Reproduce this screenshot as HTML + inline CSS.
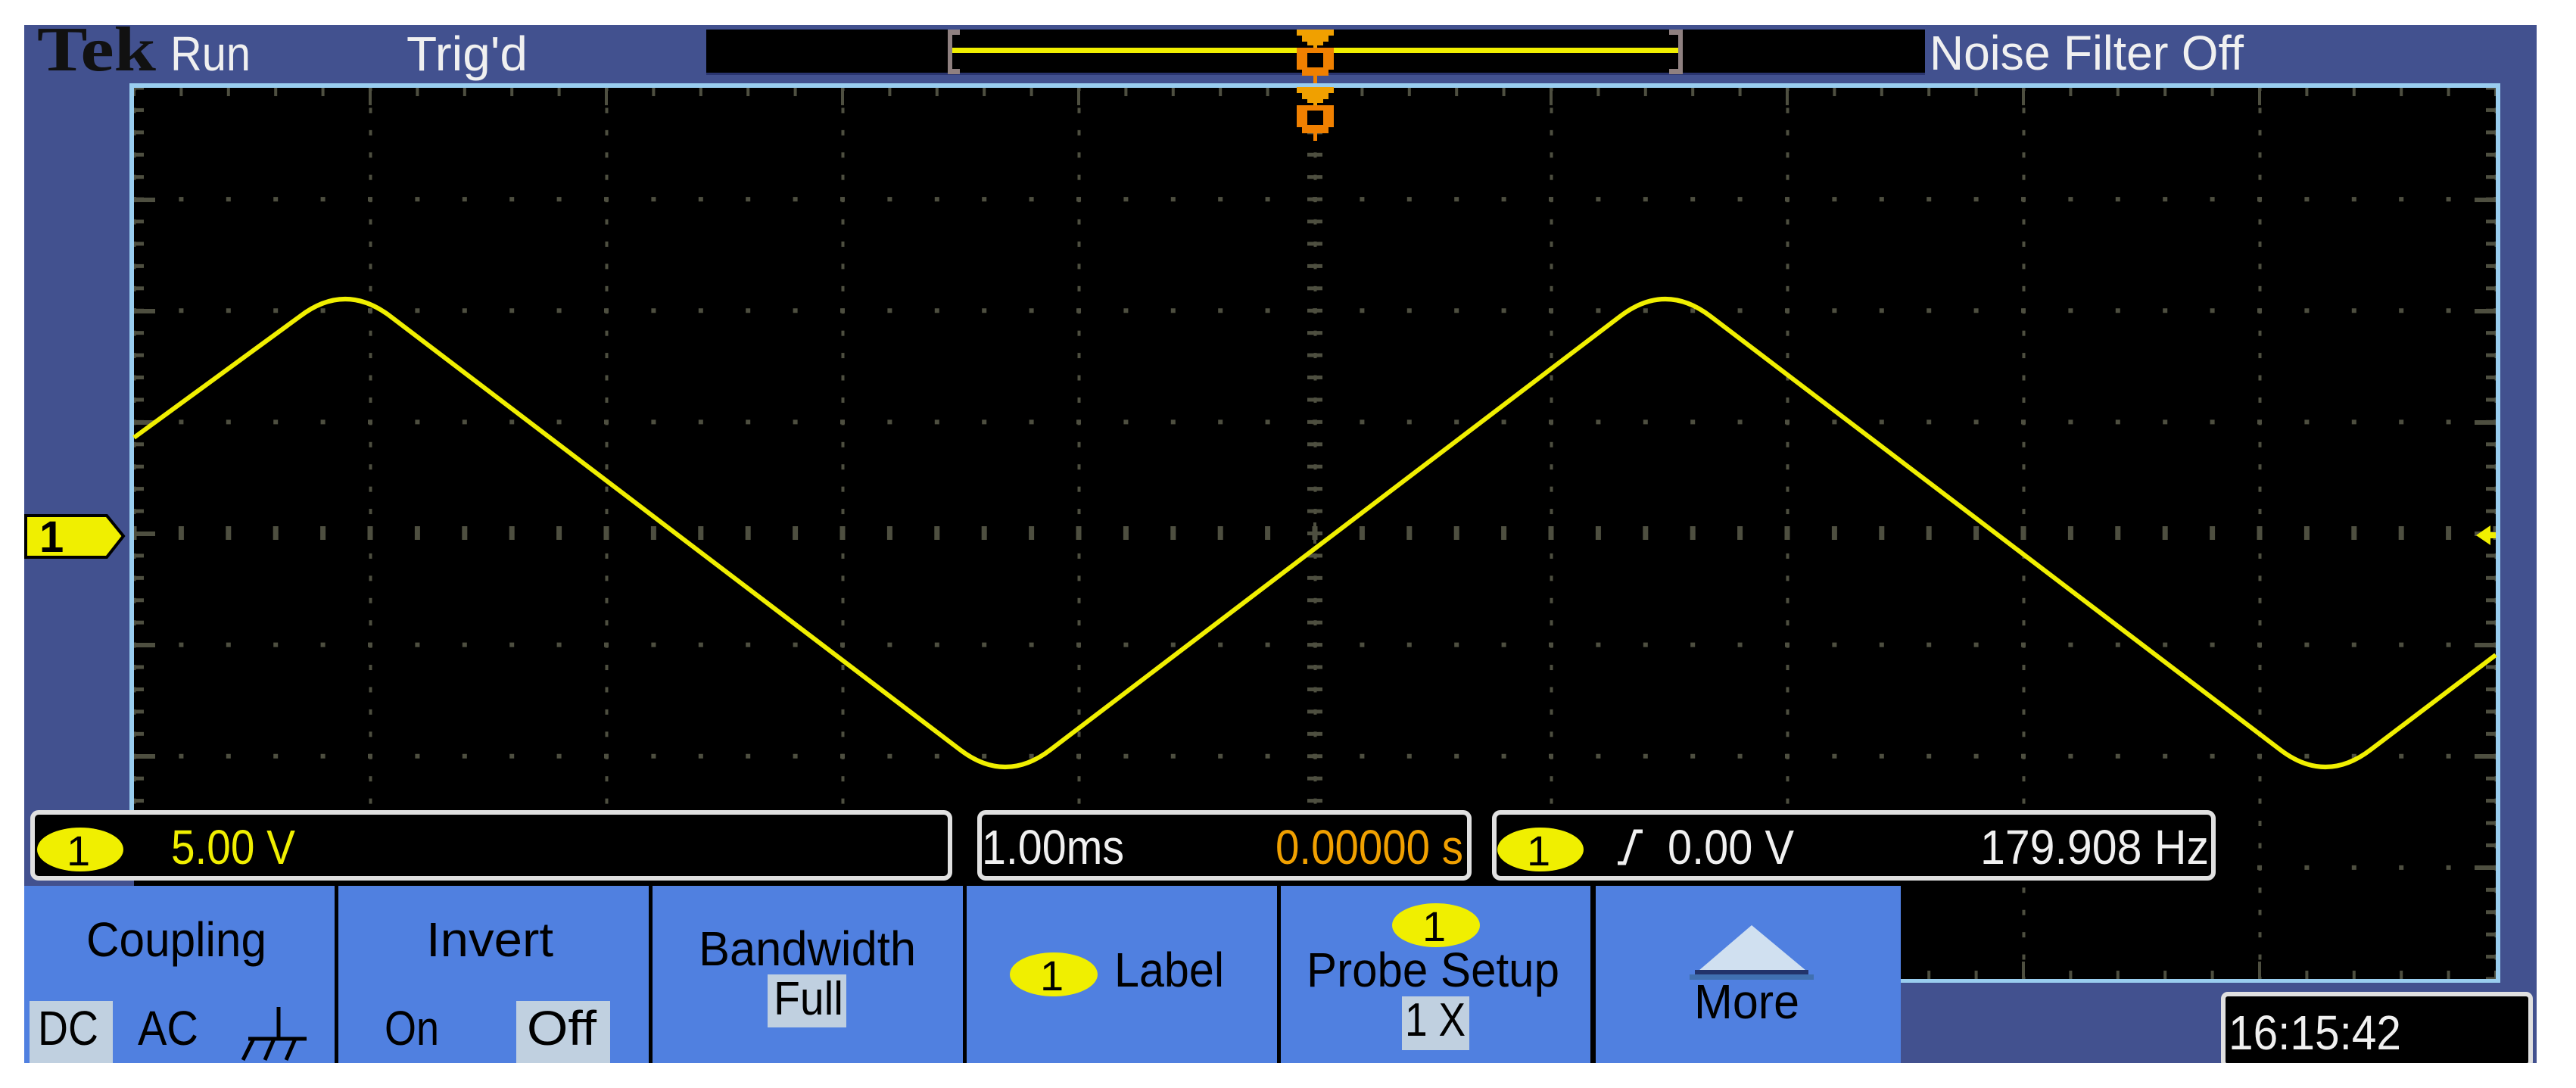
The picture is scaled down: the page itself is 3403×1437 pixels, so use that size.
<!DOCTYPE html>
<html><head><meta charset="utf-8"><style>
html,body{margin:0;padding:0;background:#fff;}
svg{display:block;}
text{font-family:"Liberation Sans",sans-serif;}
</style></head><body>
<svg width="3403" height="1437" viewBox="0 0 3403 1437" xmlns="http://www.w3.org/2000/svg">
<defs>
<pattern id="dH" patternUnits="userSpaceOnUse" x="174" y="113" width="62.4" height="147.125"><rect x="0" y="0" width="6" height="6" fill="#4e4f40"/></pattern>
<pattern id="dV" patternUnits="userSpaceOnUse" x="487.5" y="113" width="312" height="29.425"><rect x="0" y="0" width="4" height="7" fill="#4e4f40"/></pattern>
<pattern id="tTop" patternUnits="userSpaceOnUse" x="175" y="0" width="62.4" height="1437"><rect x="0" y="0" width="4" height="1437" fill="#4e4f40"/></pattern>
<pattern id="tSide" patternUnits="userSpaceOnUse" x="0" y="113.5" width="3403" height="29.425"><rect x="0" y="0" width="3403" height="5" fill="#4e4f40"/></pattern>
<pattern id="cH" patternUnits="userSpaceOnUse" x="173.5" y="0" width="62.4" height="1437"><rect x="0" y="0" width="7" height="1437" fill="#4e4f40"/></pattern>
</defs>

<rect x="32" y="33" width="3319" height="1371" fill="#42518f"/>
<rect x="171" y="110" width="3132" height="1188" fill="#99cdef"/>
<rect x="177" y="116" width="3120" height="1177" fill="#000"/>
<rect x="177" y="116" width="3120" height="1177" fill="url(#dV)"/>
<rect x="177" y="250" width="3120" height="1000" fill="url(#dH)"/>
<rect x="177" y="116" width="3120" height="11" fill="url(#tTop)"/>
<rect x="177" y="1282" width="3120" height="11" fill="url(#tTop)"/>
<rect x="177" y="116" width="13" height="1177" fill="url(#tSide)"/>
<rect x="3284" y="116" width="13" height="1177" fill="url(#tSide)"/>
<rect x="177" y="695" width="3120" height="18" fill="url(#cH)"/>
<rect x="1727" y="116" width="20" height="1177" fill="url(#tSide)"/>
<g fill="#4e4f40">
<rect x="487" y="116" width="4" height="23"/><rect x="799" y="116" width="4" height="23"/><rect x="1111" y="116" width="4" height="23"/><rect x="1423" y="116" width="4" height="23"/><rect x="1735" y="116" width="4" height="23"/><rect x="2047" y="116" width="4" height="23"/><rect x="2359" y="116" width="4" height="23"/><rect x="2671" y="116" width="4" height="23"/><rect x="2983" y="116" width="4" height="23"/>
<rect x="2671" y="1270" width="4" height="23"/><rect x="2983" y="1270" width="4" height="23"/>
<rect x="177" y="261" width="28" height="6"/><rect x="177" y="408" width="28" height="6"/><rect x="177" y="555" width="28" height="6"/><rect x="177" y="702" width="28" height="6"/><rect x="177" y="849" width="28" height="6"/><rect x="177" y="996" width="28" height="6"/><rect x="177" y="1143" width="28" height="6"/>
<rect x="3269" y="261" width="28" height="6"/><rect x="3269" y="408" width="28" height="6"/><rect x="3269" y="555" width="28" height="6"/><rect x="3269" y="702" width="28" height="6"/><rect x="3269" y="849" width="28" height="6"/><rect x="3269" y="996" width="28" height="6"/><rect x="3269" y="1143" width="28" height="6"/>
<rect x="1735" y="690" width="4" height="28"/>
</g>

<path d="M177,578 L396,418 Q456,372 516,418 L1268,990 Q1328,1036 1388,990 L2140,418 Q2200,372 2260,418 L3012,990 Q3072,1036 3132,990 L3297,865" fill="none" stroke="#f0ef00" stroke-width="6" stroke-linejoin="round"/>

<text x="49" y="93" font-weight="bold" font-size="84" fill="#111" style="font-family:'Liberation Serif',serif" textLength="157" lengthAdjust="spacingAndGlyphs">Tek</text>
<text x="225" y="93" font-size="64" fill="#f0f0f0" textLength="106" lengthAdjust="spacingAndGlyphs">Run</text>
<text x="537" y="93" font-size="64" fill="#f0f0f0" textLength="160" lengthAdjust="spacingAndGlyphs">Trig'd</text>
<rect x="933" y="39" width="1610" height="59" fill="#000"/>
<rect x="933" y="96" width="1610" height="3" fill="#2a3570"/>
<g fill="#8f8080">
<rect x="1252" y="39" width="6" height="59"/><rect x="1252" y="39" width="16" height="7"/><rect x="1252" y="91" width="16" height="7"/>
<rect x="2217" y="39" width="6" height="59"/><rect x="2205" y="39" width="18" height="7"/><rect x="2205" y="91" width="18" height="7"/>
</g>
<rect x="1258" y="63" width="959" height="7" fill="#f0ef00"/>
<g>
<path d="M1713,39 H1762 V47 H1755 V55 H1748 V60 H1727 V55 H1720 V47 H1713 Z" fill="#f0a000"/>
<rect x="1735" y="56" width="5" height="10" fill="#f0a000"/>
<path d="M1713,63 H1762 V92 H1755 V100 H1720 V92 H1713 Z" fill="#f08000"/>
<rect x="1727" y="70" width="21" height="19" fill="#000"/>
<rect x="1735" y="100" width="5" height="10" fill="#f08000"/>
<path d="M1713,115 H1762 V123 H1755 V131 H1748 V136 H1727 V131 H1720 V123 H1713 Z" fill="#f0a000"/>
<rect x="1735" y="132" width="5" height="10" fill="#f0a000"/>
<path d="M1713,139 H1762 V168 H1755 V176 H1720 V168 H1713 Z" fill="#f08000"/>
<rect x="1727" y="146" width="21" height="19" fill="#000"/>
<rect x="1735" y="176" width="5" height="10" fill="#f08000"/>
</g>
<text x="2549" y="92" font-size="64" fill="#f0f0f0" textLength="415" lengthAdjust="spacingAndGlyphs">Noise Filter Off</text>

<path d="M34,681 H141 L163,708 L141,736 H34 Z" fill="#f0ef00" stroke="#000" stroke-width="4"/>
<text x="52" y="729" font-size="58" fill="#000" font-weight="bold">1</text>
<path d="M3271,707 L3290,694 V703 H3297 V711 H3290 V720 Z" fill="#f0ef00"/>

<rect x="32" y="1163" width="145" height="7" fill="#42518f"/>
<g fill="#000" stroke="#e0e0e0" stroke-width="6">
<rect x="43" y="1073" width="1212" height="87" rx="8"/>
<rect x="1294" y="1073" width="647" height="87" rx="8"/>
<rect x="1974" y="1073" width="950" height="87" rx="8"/>
</g>
<ellipse cx="106" cy="1122" rx="57" ry="29" fill="#f0ef00"/>
<text x="88" y="1143" font-size="56" fill="#000">1</text>
<text x="226" y="1141" font-size="64" fill="#f0ef00" textLength="164" lengthAdjust="spacingAndGlyphs">5.00 V</text>
<text x="1297" y="1141" font-size="64" fill="#f0f0f0" textLength="188" lengthAdjust="spacingAndGlyphs">1.00ms</text>
<text x="1685" y="1141" font-size="64" fill="#f0a000" textLength="248" lengthAdjust="spacingAndGlyphs">0.00000 s</text>
<ellipse cx="2035" cy="1122" rx="57" ry="29" fill="#f0ef00"/>
<text x="2017" y="1143" font-size="56" fill="#000">1</text>
<path d="M2137,1140 H2146 L2160,1098 H2170" fill="none" stroke="#f0f0f0" stroke-width="5"/>
<text x="2203" y="1141" font-size="64" fill="#f0f0f0" textLength="167" lengthAdjust="spacingAndGlyphs">0.00 V</text>
<text x="2616" y="1141" font-size="64" fill="#f0f0f0" textLength="302" lengthAdjust="spacingAndGlyphs">179.908 Hz</text>

<rect x="32" y="1170" width="2479" height="234" fill="#000"/>
<g fill="#5080e0">
<rect x="32" y="1170" width="410" height="234"/>
<rect x="447" y="1170" width="410" height="234"/>
<rect x="862" y="1170" width="410" height="234"/>
<rect x="1277" y="1170" width="410" height="234"/>
<rect x="1692" y="1170" width="409" height="234"/>
<rect x="2108" y="1170" width="403" height="234"/>
</g>
<rect x="2511" y="1298" width="840" height="106" fill="#42518f"/>

<text x="114" y="1263" font-size="64" fill="#000" textLength="238" lengthAdjust="spacingAndGlyphs">Coupling</text>
<rect x="39" y="1322" width="110" height="82" fill="#c0d0e0"/>
<text x="50" y="1380" font-size="64" fill="#000" textLength="80" lengthAdjust="spacingAndGlyphs">DC</text>
<text x="182" y="1380" font-size="64" fill="#000" textLength="80" lengthAdjust="spacingAndGlyphs">AC</text>
<path d="M368,1330 V1372 M328,1372 H405 M335,1372 L321,1400 M362,1372 L350,1400 M390,1372 L378,1400" fill="none" stroke="#000" stroke-width="5"/>
<text x="563" y="1263" font-size="64" fill="#000" textLength="168" lengthAdjust="spacingAndGlyphs">Invert</text>
<text x="508" y="1380" font-size="64" fill="#000" textLength="72" lengthAdjust="spacingAndGlyphs">On</text>
<rect x="682" y="1322" width="124" height="82" fill="#c0d0e0"/>
<text x="696" y="1380" font-size="64" fill="#000" textLength="92" lengthAdjust="spacingAndGlyphs">Off</text>
<text x="923" y="1275" font-size="64" fill="#000" textLength="287" lengthAdjust="spacingAndGlyphs">Bandwidth</text>
<rect x="1014" y="1287" width="104" height="70" fill="#c0d0e0"/>
<text x="1022" y="1340" font-size="62" fill="#000" textLength="92" lengthAdjust="spacingAndGlyphs">Full</text>
<ellipse cx="1392" cy="1287" rx="58" ry="29" fill="#f0ef00"/>
<text x="1374" y="1308" font-size="56" fill="#000">1</text>
<text x="1472" y="1303" font-size="64" fill="#000" textLength="145" lengthAdjust="spacingAndGlyphs">Label</text>
<ellipse cx="1897" cy="1222" rx="58" ry="29" fill="#f0ef00"/>
<text x="1879" y="1243" font-size="56" fill="#000">1</text>
<text x="1726" y="1303" font-size="64" fill="#000" textLength="334" lengthAdjust="spacingAndGlyphs">Probe Setup</text>
<rect x="1852" y="1316" width="89" height="71" fill="#c0d0e0"/>
<text x="1856" y="1368" font-size="62" fill="#000" textLength="80" lengthAdjust="spacingAndGlyphs">1 X</text>
<path d="M2314,1222 L2386,1282 H2244 Z" fill="#d0e0f0"/>
<rect x="2239" y="1281" width="150" height="6" fill="#22336a"/>
<rect x="2232" y="1287" width="164" height="7" fill="#4070b0"/>
<text x="2238" y="1345" font-size="64" fill="#000" textLength="139" lengthAdjust="spacingAndGlyphs">More</text>

<rect x="2937" y="1313" width="406" height="95" rx="6" fill="#000" stroke="#e0e0e0" stroke-width="6"/>
<rect x="2900" y="1404" width="480" height="33" fill="#fff"/>
<text x="2944" y="1386" font-size="64" fill="#f0f0f0" textLength="228" lengthAdjust="spacingAndGlyphs">16:15:42</text>
</svg>
</body></html>
